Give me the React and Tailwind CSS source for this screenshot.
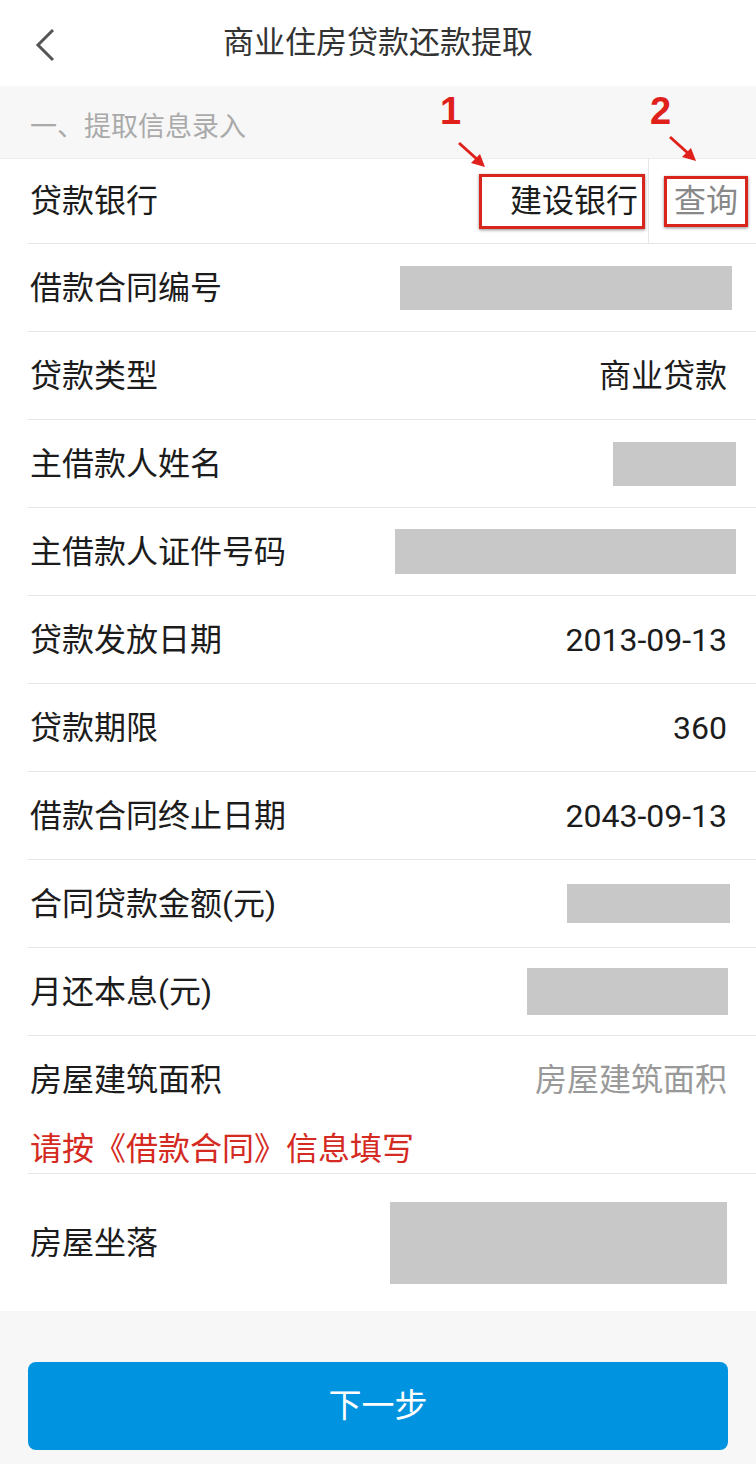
const font = { fontFamily: 'Roboto, "Noto Sans CJK SC", sans-serif' };

function Row({ label, children, h = 'h-[88px]' }) {
  return (
    <div className={`ml-[28px] flex items-center border-b border-[#e6e6e6] ${h}`}>
      <span className="flex-1 pl-[2px] text-[32px] text-[#1c1c1c]">{label}</span>
      {children}
    </div>
  );
}

function Value({ children, className = '' }) {
  return <span className={`mr-[29px] text-[32px] text-[#1c1c1c] ${className}`}>{children}</span>;
}

function Block({ className }) {
  return <div className={`bg-[#c8c8c8] ${className}`} />;
}

function Arrow({ className }) {
  return (
    <svg className={className} width="32" height="30" viewBox="0 0 32 30">
      <line x1="2" y1="2" x2="22" y2="20" stroke="#e0201a" strokeWidth="3" />
      <polygon points="28,26 14,22 23,13" fill="#e0201a" />
    </svg>
  );
}

export default function App() {
  return (
    <div className="relative min-h-screen w-[756px] bg-[#f7f7f7]" style={font}>
      {/* header */}
      <div className="relative flex h-[86px] items-center justify-center bg-white">
        <svg className="absolute left-[34px] top-[28px]" width="24" height="34" viewBox="0 0 24 34">
          <polyline points="19,2 4,17 19,32" fill="none" stroke="#555" strokeWidth="3" />
        </svg>
        <span className="text-[31px] text-[#333]">商业住房贷款还款提取</span>
      </div>

      <div className="flex h-[72px] items-end pb-[11px] pl-[30px] text-[27px] text-[#aaa]">一、提取信息录入</div>

      <div className="bg-white">
        <div className="flex h-[86px] items-center border-t border-[#ececec]">
          <div className="ml-[28px] flex h-full flex-1 items-center border-b border-[#e6e6e6]">
            <span className="flex-1 pl-[2px] text-[32px] text-[#1c1c1c]">贷款银行</span>
            <span className="flex h-[55px] w-[166px] items-center justify-end border-[3px] border-[#d9261c] pr-[4px] text-[32px] text-[#1c1c1c] shadow-[0_1px_3px_rgba(0,0,0,0.45)]">建设银行</span>
            <div className="ml-[3px] w-px self-stretch bg-[#e6e6e6]" />
            <span className="ml-[15px] mr-[8px] flex h-[51px] w-[84px] items-center justify-center border-[3px] border-[#d9261c] text-[32px] text-[#888] shadow-[0_1px_3px_rgba(0,0,0,0.45)]">查询</span>
          </div>
        </div>
        <Row label="借款合同编号"><Block className="mr-[24px] h-[44px] w-[332px]" /></Row>
        <Row label="贷款类型"><Value>商业贷款</Value></Row>
        <Row label="主借款人姓名"><Block className="mr-[20px] h-[44px] w-[123px]" /></Row>
        <Row label="主借款人证件号码"><Block className="mr-[20px] h-[45px] w-[341px]" /></Row>
        <Row label="贷款发放日期"><Value>2013-09-13</Value></Row>
        <Row label="贷款期限"><Value>360</Value></Row>
        <Row label="借款合同终止日期"><Value>2043-09-13</Value></Row>
        <Row label="合同贷款金额(元)"><Block className="mr-[26px] h-[39px] w-[163px]" /></Row>
        <Row label="月还本息(元)"><Block className="mr-[28px] h-[47px] w-[201px]" /></Row>

        <div className="ml-[28px] border-b border-[#e6e6e6]">
          <div className="flex h-[88px] items-center">
            <span className="flex-1 pl-[2px] text-[32px] text-[#1c1c1c]">房屋建筑面积</span>
            <span className="mr-[29px] text-[32px] text-[#999]">房屋建筑面积</span>
          </div>
          <div className="flex h-[49px] items-center pl-[2px] text-[32px] text-[#d42a22]">请按《借款合同》信息填写</div>
        </div>

        <div className="ml-[28px] flex h-[137px] items-center">
          <span className="flex-1 pl-[2px] text-[32px] text-[#1c1c1c]">房屋坐落</span>
          <Block className="mr-[29px] h-[82px] w-[337px]" />
        </div>
      </div>

      <div className="px-[28px] pt-[51px]">
        <button className="flex h-[88px] w-[700px] items-center justify-center rounded-[8px] bg-[#0094e0] text-[33px] text-white">下一步</button>
      </div>

      {/* annotations */}
      <span className="absolute left-[440px] top-[92px] text-[38px] font-bold leading-none text-[#e0201a]" style={{ fontFamily: '"Liberation Sans", Arial, sans-serif' }}>1</span>
      <Arrow className="absolute left-[457px] top-[141px]" />
      <span className="absolute left-[650px] top-[92px] text-[38px] font-bold leading-none text-[#e0201a]" style={{ fontFamily: '"Liberation Sans", Arial, sans-serif' }}>2</span>
      <Arrow className="absolute left-[668px] top-[135px]" />
    </div>
  );
}
